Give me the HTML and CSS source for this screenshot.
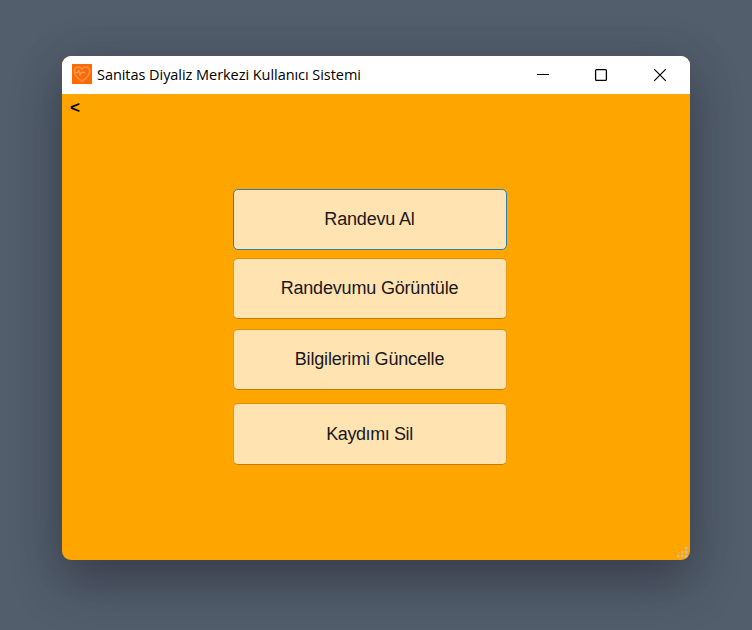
FILE: index.html
```html
<!DOCTYPE html>
<html lang="tr">
<head>
<meta charset="utf-8">
<title>Sanitas Diyaliz Merkezi Kullanıcı Sistemi</title>
<link rel="stylesheet" href="styles.css">
</head>
<body>
<main class="window">
  <header class="titlebar">
    <svg class="app-icon" viewBox="0 0 20 20" aria-hidden="true">
      <rect width="20" height="20" fill="#ff6a00"/>
      <path d="M10 17.2C6.500 15 2.400 11.500 2.400 7.200C2.400 2.500 7.700 1.600 10 5.200C12.300 1.600 17.600 2.500 17.600 7.200C17.600 11.500 13.500 15 10 17.200Z" fill="none" stroke="#ff9048" stroke-width="1.700"/>
      <path d="M3.500 8.500H5.500L6.800 6.500L8 11L9.300 8.500H13" fill="none" stroke="#ffa061" stroke-width="1.300"/>
    </svg>
    <h1 class="title">Sanitas Diyaliz Merkezi Kullanıcı Sistemi</h1>
    <div class="controls">
      <svg class="control" viewBox="0 0 14 14"><path d="M1 6.500H13" stroke="#000" stroke-width="1"/></svg>
      <svg class="control" viewBox="0 0 14 14"><rect x="1.600" y="1.600" width="10.800" height="10.800" rx="1" fill="none" stroke="#000" stroke-width="1.300"/></svg>
      <svg class="control" viewBox="0 0 14 14"><path d="M1.200 1.200L12.800 12.800M12.800 1.200L1.200 12.800" fill="none" stroke="#000" stroke-width="1.200"/></svg>
    </div>
  </header>
  <section class="content">
    <a class="back">&lt;</a>
    <nav class="menu">
      <button class="action focused">Randevu Al</button>
      <button class="action">Randevumu Görüntüle</button>
      <button class="action">Bilgilerimi Güncelle</button>
      <button class="action last">Kaydımı Sil</button>
    </nav>
    <svg class="grip" viewBox="0 0 11 11" fill="#bfbfbf" aria-hidden="true">
      <rect x="8" y="0" width="2.500" height="2.500"/>
      <rect x="4" y="4" width="2.500" height="2.500"/><rect x="8" y="4" width="2.500" height="2.500"/>
      <rect x="0" y="8" width="2.500" height="2.500"/><rect x="4" y="8" width="2.500" height="2.500"/><rect x="8" y="8" width="2.500" height="2.500"/>
    </svg>
  </section>
</main>
</body>
</html>
```
FILE: styles.css
```css
* { box-sizing: border-box; }

body {
  margin: 0;
  height: 630px;
  padding: 56px 62px 70px;
  background: #525e6c;
  overflow: hidden;
}

.window {
  display: flex;
  flex-direction: column;
  width: 628px;
  height: 504px;
  border-radius: 9px;
  overflow: hidden;
  background: #ffa500;
  box-shadow: 0 0 1px rgba(110, 105, 95, .8), 0 22px 48px rgba(32, 30, 42, .46), 0 0 44px rgba(54, 50, 72, .15);
}

.titlebar {
  display: flex;
  align-items: center;
  flex: 0 0 38px;
  padding: 0 23px 0 10px;
  background: #fff;
}

.app-icon {
  width: 20px;
  height: 20px;
  margin-top: -2px;
}

.title {
  margin: 0 0 0 5px;
  font: 400 14.500px/20px "Open Sans", "Noto Sans", sans-serif;
  letter-spacing: -.05px;
  white-space: nowrap;
  color: #000;
}

.controls {
  display: flex;
  gap: 44px;
  margin-left: auto;
}

.control {
  width: 14px;
  height: 14px;
}

.control:last-child {
  margin-left: 1px;
}

.content {
  position: relative;
  display: flex;
  flex-direction: column;
  flex: 1;
}

.back {
  height: 26px;
  padding-left: 8px;
  font: 700 17px/27px "Liberation Sans", Arial, sans-serif;
  color: #000;
}

.menu {
  display: grid;
  grid-template-rows: 69px 71px 74px 62px;
  width: 274px;
  margin: 69px 0 0 171px;
}

.action {
  width: 274px;
  height: 61px;
  padding: 0 1px 2px 0;
  border: 1px solid #e69a15;
  border-top-color: #df9009;
  border-bottom-color: #bd7c0a;
  border-radius: 5px;
  background: #ffe3b1;
  font: 400 18px/1 "Liberation Sans", Arial, sans-serif;
  letter-spacing: -.18px;
  color: #1b1720;
}

.last {
  height: 62px;
  padding: 0 1px 0 0;
  letter-spacing: -.4px;
}

.focused {
  border-color: #2a7fb4;
}

.grip {
  position: absolute;
  right: 2px;
  bottom: 2px;
  width: 11px;
  height: 11px;
}
```
